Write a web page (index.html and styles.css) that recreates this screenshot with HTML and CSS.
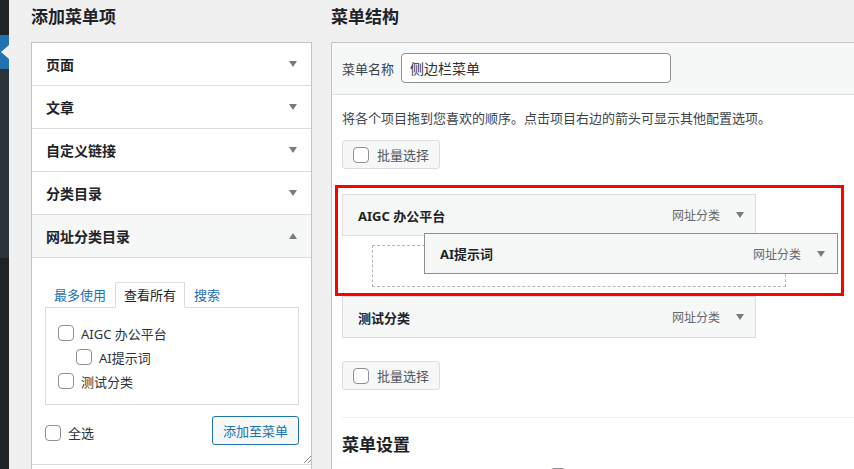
FILE: index.html
```html
<!doctype html>
<html lang="zh-CN">
 <head>
  <meta charset="UTF-8">
  <title>菜单</title>
  <link rel="stylesheet" href="styles.css">
 </head>
 <body>
  <div class="admin-strip"></div>
  <div class="page">
   <div class="col-left">
    <h2 class="section-title">添加菜单项</h2>
    <div class="accordion">
     <div class="acc-title">页面<span class="caret"></span></div>
     <div class="acc-title">文章<span class="caret"></span></div>
     <div class="acc-title">自定义链接<span class="caret"></span></div>
     <div class="acc-title">分类目录<span class="caret"></span></div>
     <div class="acc-title open">网址分类目录<span class="caret up"></span></div>
     <div class="acc-body">
      <div class="tabs">
       <span class="tab">最多使用</span>
       <span class="tab active">查看所有</span>
       <span class="tab">搜索</span>
      </div>
      <div class="tab-panel">
       <label class="check-row"><input type="checkbox" class="cb"> AIGC 办公平台</label>
       <label class="check-row child"><input type="checkbox" class="cb"> AI提示词</label>
       <label class="check-row"><input type="checkbox" class="cb"> 测试分类</label>
      </div>
      <div class="acc-foot">
       <label class="select-all"><input type="checkbox" class="cb"> 全选</label>
       <button class="btn-add">添加至菜单</button>
      </div>
      <svg class="resize" width="8" height="8" viewBox="0 0 8 8">
       <path d="M1 8 L8 1 M5 8 L8 5" stroke="#8c8f94" stroke-width="1" fill="none"/>
      </svg>
     </div>
     <div class="acc-title">&nbsp;</div>
    </div>
   </div>

   <div class="col-right">
    <h2 class="section-title">菜单结构</h2>
    <div class="menu-box">
     <div class="menu-head">
      <span class="menu-name-label">菜单名称</span>
      <input class="menu-name" type="text" value="侧边栏菜单">
     </div>
     <div class="menu-body">
      <p class="hint">将各个项目拖到您喜欢的顺序。点击项目右边的箭头可显示其他配置选项。</p>
      <label class="bulk"><input type="checkbox" class="cb"> 批量选择</label>

      <div class="menu-list">
       <div class="menu-item">
        <span class="item-title">AIGC 办公平台</span>
        <span class="item-type">网址分类</span>
        <span class="caret"></span>
       </div>
       <div class="placeholder"></div>
       <div class="menu-item">
        <span class="item-title">测试分类</span>
        <span class="item-type">网址分类</span>
        <span class="caret"></span>
       </div>
       <div class="menu-item dragging">
        <span class="item-title">AI提示词</span>
        <span class="item-type">网址分类</span>
        <span class="caret"></span>
       </div>
       <div class="highlight"></div>
      </div>

      <label class="bulk bulk-bottom"><input type="checkbox" class="cb"> 批量选择</label>

      <div class="settings">
       <h3 class="settings-title">菜单设置</h3>
       <div class="setting-row">
        <input type="checkbox" class="cb">
       </div>
      </div>
     </div>
    </div>
   </div>
  </div>
 </body>
</html>
```

FILE: styles.css
```css
* {
  box-sizing: border-box;
}

body {
  margin: 0;
  height: 469px;
  overflow: hidden;
  display: flex;
  background: #f0f0f1;
  font-family: "Noto Sans", "Noto Sans CJK SC", sans-serif;
  font-size: 13px;
  color: #3c434a;
}

/* dark admin menu edge */
.admin-strip {
  flex: none;
  width: 9px;
  position: relative;
  background: linear-gradient(#1d2327 0 35px, #2271b1 35px 69px, #2c3338 69px 258px, #1d2327 258px);
}

.admin-strip::after {
  content: "";
  position: absolute;
  right: 0;
  top: 45px;
  border-top: 7px solid transparent;
  border-bottom: 7px solid transparent;
  border-right: 8px solid #f0f0f1;
}

.page {
  display: flex;
  gap: 19px;
  padding-left: 22px;
}

.col-left {
  flex: none;
  width: 281px;
}

.col-right {
  flex: none;
  width: 640px;
}

.section-title {
  margin: 5px 0 13px;
  font-size: 17px;
  line-height: 24px;
  font-weight: 700;
  color: #1d2327;
}

/* left accordion */
.accordion {
  background: #fff;
  border: 1px solid #c3c4c7;
  border-bottom: 0;
}

.acc-title {
  display: flex;
  align-items: center;
  justify-content: space-between;
  height: 43px;
  padding: 0 14px 1px;
  border-bottom: 1px solid #dcdcde;
  font-size: 14px;
  font-weight: 700;
  color: #1d2327;
}

.acc-title.open {
  background: #f6f7f7;
}

.caret {
  flex: none;
  width: 0;
  height: 0;
  border-left: 4px solid transparent;
  border-right: 4px solid transparent;
  border-top: 6px solid #787c82;
}

.caret.up {
  border-top: 0;
  border-bottom: 6px solid #787c82;
}

.acc-body {
  position: relative;
  padding: 24px 12px 19px 13px;
  border-bottom: 1px solid #dcdcde;
}

.tabs {
  display: flex;
  height: 25px;
  align-items: flex-start;
}

.tab {
  height: 25px;
  padding: 0 8px;
  border: 1px solid transparent;
  border-bottom: 0;
  line-height: 24px;
  color: #2271b1;
}

.tab.active {
  position: relative;
  z-index: 1;
  height: 26px;
  border-color: #dcdcde;
  border-bottom: 1px solid #fff;
  background: #fff;
  color: #1d2327;
}

.tab-panel {
  height: 98px;
  padding: 13px 12px 0;
  border: 1px solid #dcdcde;
}

.check-row {
  display: flex;
  align-items: center;
  gap: 7px;
  height: 24px;
  color: #2c3338;
}

.check-row.child {
  padding-left: 18px;
}

.cb {
  appearance: none;
  flex: none;
  width: 16px;
  height: 16px;
  margin: 0;
  border: 1px solid #8c8f94;
  border-radius: 4px;
  background: #fff;
}

.acc-foot {
  display: flex;
  justify-content: space-between;
  align-items: center;
  height: 29px;
  margin-top: 11px;
}

.select-all {
  display: flex;
  align-items: center;
  gap: 7px;
  padding-top: 4px;
  color: #2c3338;
}

.btn-add {
  height: 29px;
  padding: 0 10px;
  border: 1px solid #2271b1;
  border-radius: 3px;
  background: #f6f7f7;
  color: #2271b1;
  font-family: inherit;
  font-size: 13px;
}

.resize {
  position: absolute;
  right: 0;
  bottom: 1px;
}

/* right: menu structure */
.menu-box {
  background: #fff;
  border-left: 1px solid #c3c4c7;
  border-top: 1px solid #c3c4c7;
  height: 440px;
}

.menu-head {
  display: flex;
  align-items: center;
  gap: 7px;
  padding: 10px 10px 11px;
  background: #f6f7f7;
  border-bottom: 1px solid #dcdcde;
}

.menu-name-label {
  color: #3c434a;
}

.menu-name {
  width: 270px;
  height: 30px;
  padding: 0 8px;
  border: 1px solid #8c8f94;
  border-radius: 4px;
  background: #fff;
  font-family: inherit;
  font-size: 14px;
  color: #2c3338;
}

.menu-body {
  padding: 13px 10px 0;
}

.hint {
  margin: 0;
  line-height: 20px;
}

.bulk {
  display: flex;
  align-items: center;
  gap: 8px;
  width: max-content;
  height: 29px;
  margin-top: 12px;
  padding: 0 10px;
  border: 1px solid #dcdcde;
  border-radius: 3px;
  background: #f6f7f7;
  color: #50575e;
}

.bulk-bottom {
  margin-top: 23px;
}

.menu-list {
  position: relative;
  margin-top: 25px;
}

.menu-item {
  display: flex;
  align-items: center;
  width: 414px;
  height: 42px;
  padding: 0 11px 0 15px;
  border: 1px solid #dcdcde;
  background: #f6f7f7;
}

.item-title {
  flex: 1;
  font-weight: 700;
  color: #1d2327;
}

.item-type {
  margin-right: 16px;
  font-size: 12px;
  color: #646970;
}

.placeholder {
  width: 414px;
  height: 42px;
  margin: 9px 0 9px 30px;
  border: 1px dashed #b4b6b9;
}

.menu-item.dragging {
  position: absolute;
  left: 82px;
  top: 39px;
  height: 41px;
  padding-right: 12px;
  border-color: #8c8f94;
}

.highlight {
  position: absolute;
  left: -7px;
  top: -9px;
  width: 509px;
  height: 111px;
  border: 3px solid #ff0000;
}

.settings {
  margin-top: 27px;
  border-top: 1px solid #f0f0f1;
}

.settings-title {
  margin: 15px 0 0;
  font-size: 17px;
  line-height: 24px;
  font-weight: 700;
  color: #1d2327;
}

.setting-row {
  display: flex;
  margin-top: 11px;
  padding-left: 208px;
}
```
